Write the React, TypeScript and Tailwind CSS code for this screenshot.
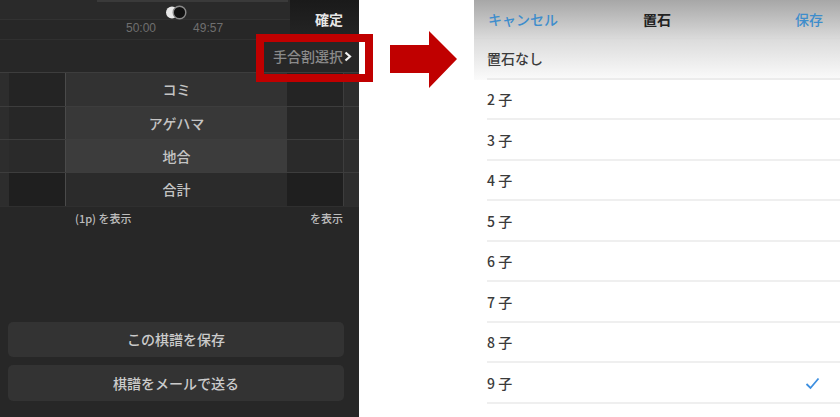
import React from 'react';

const rows = ['置石なし', '2 子', '3 子', '4 子', '5 子', '6 子', '7 子', '8 子', '9 子'];

const tableRows = [
  { label: 'コミ', mid: 'bg-[#323232]', side: 'bg-[#242424]' },
  { label: 'アゲハマ', mid: 'bg-[#383838]', side: 'bg-[#272727]' },
  { label: '地合', mid: 'bg-[#3c3c3c]', side: 'bg-[#2a2a2a]' },
  { label: '合計', mid: 'bg-[#2b2b2b]', side: 'bg-[#1f1f1f]' },
];

const ToggleIcon = () => (
  <svg width="22" height="15" viewBox="0 0 22 15">
    <circle cx="7" cy="7.5" r="6" fill="#e8e8e8" />
    <circle cx="14.5" cy="7.5" r="6.3" fill="#111" stroke="#8a8a8a" strokeWidth="1.4" />
  </svg>
);

const DarkPanel = () => (
  <div className="flex h-full w-[359px] shrink-0 flex-col bg-[#272727]">
    {/* top bars */}
    <div className="flex h-[40px]">
      <div className="flex w-[290px] flex-col">
        <div className="relative flex h-[20px] items-end border-b border-[#323232] bg-[#2a2a2a]">
          <div className="absolute left-[97px] top-0 h-[2px] w-[191px] bg-[#3a3a3a]" />
          <div className="ml-[165px] -mb-[1px]">
            <ToggleIcon />
          </div>
        </div>
        <div className="flex h-[20px] items-start border-b border-[#303030] pt-[2px] text-[12px] leading-none text-[#6f6f6f] font-['Liberation_Sans',sans-serif]">
          <span className="ml-[126px]">50:00</span>
          <span className="ml-[37px]">49:57</span>
        </div>
      </div>
      <div className="flex flex-1 items-center justify-end bg-gradient-to-b from-[#1a1a1a] to-[#252525] pr-[16px] pb-[2px] text-[14px] font-bold text-[#e6e6e6]">
        確定
      </div>
    </div>

    <div className="flex h-[32px] items-center justify-end pr-[7px] text-[14px] font-medium text-[#8a8a8a]">
      <span>手合割選択</span>
      <svg width="8" height="11" viewBox="0 0 8 11" className="ml-[1px]">
        <path d="M1.5 1.5 L6 5.5 L1.5 9.5" fill="none" stroke="#f2f2f2" strokeWidth="2.2" />
      </svg>
    </div>

    {/* score table */}
    <div className="flex flex-col">
      {tableRows.map((r, i) => (
        <div
          key={r.label}
          className={`flex ${i === 1 || i === 2 ? 'h-[33px]' : 'h-[34px]'} border-t border-[#3d3d3d]`}
        >
          <div className="w-[9px] bg-[#2d2d2d]" />
          <div className={`w-[56px] ${r.side}`} />
          <div
            className={`flex w-[222px] items-center justify-center border-l border-[#4a4a4a] text-[14px] font-medium text-[#c4c4c4] ${r.mid}`}
          >
            {r.label}
          </div>
          <div className={`w-[56px] ${r.side}`} />
          <div className="flex-1 border-l border-[#3d3d3d] bg-[#2e2e2e]" />
        </div>
      ))}
    </div>

    <div className="flex h-[24px] items-center justify-between border-t border-[#2f2f2f] pl-[75px] pr-[16px] text-[11px] font-medium text-[#bdbdbd]">
      <span>(1p) を表示</span>
      <span>を表示</span>
    </div>

    <div className="flex-1" />

    <div className="flex flex-col gap-[8px] px-[8px] pb-[16px] pr-[15px]">
      <button className="h-[35px] rounded-[5px] bg-[#333333] text-[14px] font-medium text-[#cbcbcb]">
        この棋譜を保存
      </button>
      <button className="h-[36px] rounded-[5px] bg-[#333333] text-[14px] font-medium text-[#cbcbcb]">
        棋譜をメールで送る
      </button>
    </div>
  </div>
);

const Arrow = () => (
  <svg width="68" height="58" viewBox="0 0 68 58">
    <path d="M0 14 H39 V0 L67 28 L39 57 V42 H0 Z" fill="#c00000" />
  </svg>
);

const LightPanel = () => (
  <div className="flex h-full flex-1 flex-col bg-white">
    <div className="bg-gradient-to-b from-[#a7a7a7] via-[#dcdcdc] to-[#fbfbfb]">
      <div className="relative flex h-[39px] items-center justify-between border-b border-[#d8d8d8] pl-[14px] pr-[17px] text-[14px] font-medium">
        <span className="text-[#3e8dcc]">キャンセル</span>
        <span className="absolute left-1/2 -translate-x-1/2 font-bold text-[#222]">置石</span>
        <span className="text-[#3e8dcc]">保存</span>
      </div>
      <div className="ml-[13px] flex h-[40.5px] items-center border-b-2 border-[#ececec] text-[14px] font-medium text-[#3b3b3b]">
        {rows[0]}
      </div>
    </div>
    {rows.slice(1).map((r, i) => (
      <div
        key={r}
        className="ml-[13px] flex h-[40.5px] items-center justify-between border-b-2 border-[#efefef] pr-[20px] pt-[2px] text-[14px] font-medium text-[#3b3b3b]"
      >
        <span>{r}</span>
        {i === rows.length - 2 && (
          <svg width="15" height="13" viewBox="0 0 15 13">
            <path d="M1.5 7 L5.5 11 L13.5 1.5" fill="none" stroke="#3d8fe0" strokeWidth="1.8" />
          </svg>
        )}
      </div>
    ))}
  </div>
);

export default function App() {
  return (
    <div className="relative flex h-[417px] w-[840px] overflow-hidden bg-white font-['Noto_Sans_CJK_JP',sans-serif]">
      <DarkPanel />
      <div className="w-[115px] shrink-0 pl-[31px] pt-[31px]">
        <Arrow />
      </div>
      <LightPanel />
      {/* annotation box */}
      <div className="absolute left-[256px] top-[34px] h-[48px] w-[117px] border-[8px] border-[#c00000]" />
    </div>
  );
}
